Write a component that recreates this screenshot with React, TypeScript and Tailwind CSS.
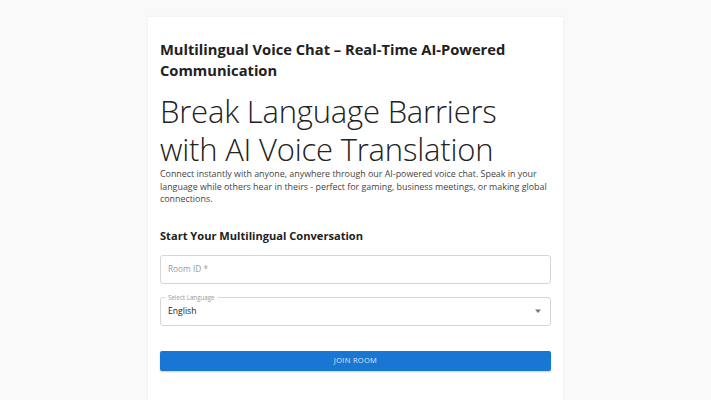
import React from 'react';

const App = () => {
  return (
    <div className="min-h-screen w-full bg-[#f9f9f9] font-['Open_Sans',sans-serif] text-[#212121]">
      <div className="flex justify-center pt-[17px]">
        <div className="w-[415px] bg-white px-3 pt-[22px] pb-10 shadow-[0_0_3px_rgba(0,0,0,0.06)]">
          {/* Page title */}
          <h1 className="text-[14.7px] font-bold leading-[21px]">
            Multilingual Voice Chat – Real-Time AI-Powered Communication
          </h1>

          {/* Hero */}
          <h2 className="mt-[11px] text-[31px] font-light leading-[38px] tracking-[-0.2px] text-[#222]">
            Break Language Barriers with AI Voice Translation
          </h2>
          <p className="text-[8.9px] leading-[12.5px] text-[#444]">
            Connect instantly with anyone, anywhere through our AI-powered voice chat. Speak in your
            language while others hear in theirs - perfect for gaming, business meetings, or making global
            connections.
          </p>

          {/* Form */}
          <h3 className="mt-[21px] text-[11.1px] font-bold leading-[18px]">
            Start Your Multilingual Conversation
          </h3>

          <div className="mt-[10px] flex h-[29px] items-center rounded-[3px] border border-[#d6d6d6] px-[7px]">
            <span className="text-[8.3px] text-[#9a9a9a]">Room ID *</span>
          </div>

          <div className="relative mt-[13px] flex h-[29px] items-center rounded-[3px] border border-[#d6d6d6] px-[7px]">
            <span className="absolute -top-[5px] left-[4px] bg-white px-[3px] text-[6.2px] leading-[9px] text-[#9a9a9a]">
              Select Language
            </span>
            <span className="flex-1 text-[8.6px] text-[#222]">English</span>
            <svg width="8" height="5" viewBox="0 0 8 5" className="mr-[1px]">
              <path d="M1 0.5h6L4 4z" fill="#757575" />
            </svg>
          </div>

          <button className="mt-[25px] flex h-[20px] w-full items-center justify-center rounded-[2px] bg-[#1976d2] text-[7.5px] uppercase tracking-[0.3px] text-[#dce9f8] shadow-[0_1px_2px_rgba(0,0,0,0.2)]">
            Join Room
          </button>
        </div>
      </div>
    </div>
  );
};

export default App;
